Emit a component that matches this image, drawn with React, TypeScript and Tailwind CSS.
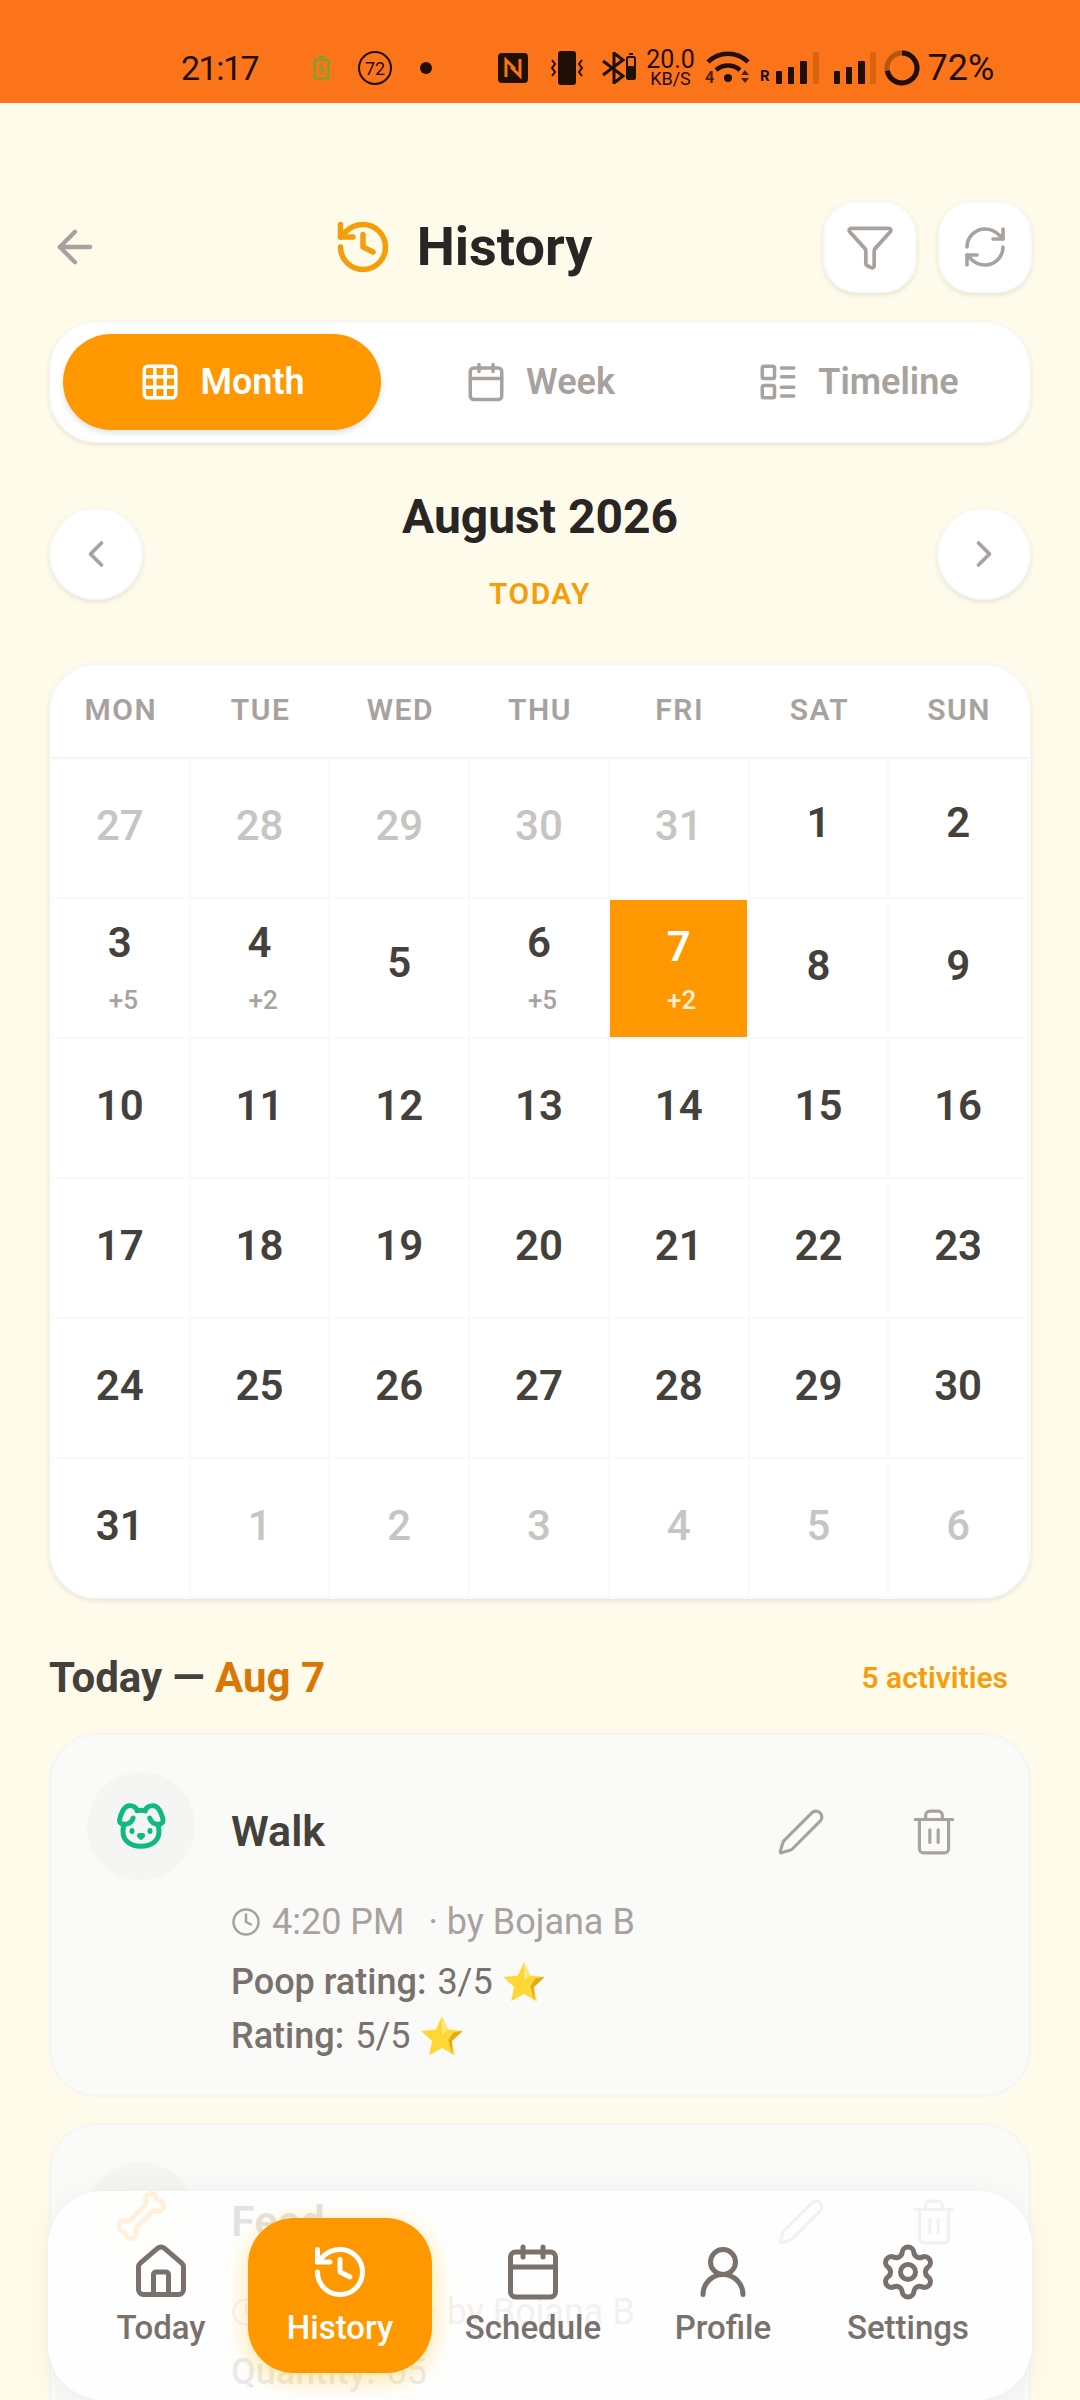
import {
  ArrowLeft,
  Bone,
  Calendar,
  ChevronLeft,
  ChevronRight,
  Clock,
  Dog,
  Funnel,
  Grid3x3,
  History,
  House,
  LayoutList,
  Pen,
  RefreshCw,
  Settings,
  Trash2,
  UserRound,
} from "lucide-react"
import type { ReactNode } from "react"

type Day = { d: number; muted?: boolean; badge?: string; today?: boolean; up?: boolean }

const weekdays = ["MON", "TUE", "WED", "THU", "FRI", "SAT", "SUN"]

const days: Day[] = [
  { d: 27, muted: true },
  { d: 28, muted: true },
  { d: 29, muted: true },
  { d: 30, muted: true },
  { d: 31, muted: true },
  { d: 1, up: true },
  { d: 2, up: true },
  { d: 3, badge: "+5" },
  { d: 4, badge: "+2" },
  { d: 5, up: true },
  { d: 6, badge: "+5" },
  { d: 7, badge: "+2", today: true },
  { d: 8 },
  { d: 9 },
  ...Array.from({ length: 22 }, (_, i) => ({ d: i + 10 })),
  { d: 1, muted: true },
  { d: 2, muted: true },
  { d: 3, muted: true },
  { d: 4, muted: true },
  { d: 5, muted: true },
  { d: 6, muted: true },
]

function Star() {
  return (
    <svg width="44" height="42" viewBox="0 0 40 38" className="ml-[9px]">
      <path d="M20 1l5.6 12 13.2 1.5-9.8 9 2.7 13L20 30l-11.7 6.5 2.7-13-9.8-9L14.400 13z" fill="#fdd835" />
      <path d="M20 1l5.600 12L20 18z" fill="#ffe873" />
      <path d="M29 23.500l9.800-9-8 1-5 7 3.500 14.500z" fill="#e8a81c" />
    </svg>
  )
}

function StatusIcons() {
  return (
    <div className="flex h-[103px] items-center bg-[#fc7419] pt-[33px] pl-[181px] font-['Roboto',sans-serif] text-[#1f0f04]">
      <span className="w-[78px] text-[34px] leading-none tracking-[-1.500px]">21:17</span>
      <svg width="17" height="24" viewBox="0 0 17 24" className="ml-[54px]" fill="none" stroke="#62ad2f" strokeWidth="2">
        <rect x="1.500" y="3.500" width="14" height="19" rx="2" />
        <path d="M6 1h5" />
        <path d="M9 8l-2.500 5h4l-2.500 5" strokeWidth="1.500" />
      </svg>
      <svg width="36" height="36" viewBox="0 0 36 36" className="ml-[27px]" fill="none" stroke="#1f0f04" strokeWidth="2">
        <circle cx="18" cy="18" r="16" />
        <text x="18" y="24.500" textAnchor="middle" fontSize="18" fill="#1f0f04" stroke="none" fontFamily="Roboto">72</text>
      </svg>
      <span className="ml-[27px] h-[12px] w-[12px] rounded-full bg-[#1f0f04]" />
      <svg width="30" height="30" viewBox="0 0 30 30" className="ml-[66px]">
        <rect width="30" height="30" rx="4" fill="#1f0f04" />
        <path d="M8 24V7l9 9M22 6v17l-9-9" fill="none" stroke="#fc7419" strokeWidth="3" />
      </svg>
      <svg width="36" height="34" viewBox="0 0 36 34" className="ml-[21px]" fill="#1f0f04">
        <rect x="9" y="0" width="18" height="34" rx="3" />
        <path d="M3 9l3 4-3 4 3 4-3 4M33 9l-3 4 3 4-3 4 3 4" fill="none" stroke="#1f0f04" strokeWidth="2" />
      </svg>
      <svg width="35" height="32" viewBox="0 0 35 32" className="ml-[17px]" fill="none" stroke="#1f0f04" strokeWidth="3">
        <path d="M1 9l20 15-9 7V1l9 7L1 23" />
        <rect x="25" y="5" width="8" height="22" rx="1.500" strokeWidth="2" />
        <rect x="25" y="14" width="8" height="13" fill="#1f0f04" stroke="none" />
        <path d="M27 2h4" strokeWidth="2" />
      </svg>
      <div className="ml-[9px] flex w-[49px] flex-col items-center">
        <span className="h-[20px] text-[25px] leading-[20px]">20.0</span>
        <span className="mt-[1px] h-[15px] text-[18px] leading-[15px]">KB/S</span>
      </div>
      <svg width="46" height="34" viewBox="0 0 46 34" className="ml-[10px] overflow-visible" fill="#1f0f04">
        <path d="M3 11C14 0 32 0 43 11M11 19c7-6 17-6 24 0" fill="none" stroke="#1f0f04" strokeWidth="4.500" />
        <circle cx="23" cy="27" r="4" />
        <text x="0" y="32" fontSize="16" fontWeight="700" fontFamily="Roboto" fill="#4a2408">4</text>
        <path d="M36 24l4-5 4 5zM36 27l4 5 4-5z" fill="#4a2408" />
      </svg>
      <span className="mt-[16px] ml-[9px] text-[15px] leading-none font-bold">R</span>
      <svg width="44" height="32" viewBox="0 0 44 32" className="ml-[6px]">
        <rect x="0" y="19" width="6" height="13" rx="1" fill="#1f0f04" />
        <rect x="12" y="15" width="6" height="17" rx="1" fill="#1f0f04" />
        <rect x="24" y="9" width="7" height="23" rx="1" fill="#1f0f04" />
        <rect x="37" y="0" width="6" height="32" rx="1" fill="#d9640f" />
      </svg>
      <svg width="44" height="32" viewBox="0 0 44 32" className="ml-[14px]">
        <rect x="0" y="19" width="6" height="13" rx="1" fill="#1f0f04" />
        <rect x="12" y="15" width="6" height="17" rx="1" fill="#1f0f04" />
        <rect x="24" y="9" width="7" height="23" rx="1" fill="#1f0f04" />
        <rect x="36" y="0" width="6" height="32" rx="1" fill="#d9640f" />
      </svg>
      <svg width="36" height="36" viewBox="0 0 36 36" className="ml-[6px]" fill="none" strokeWidth="5">
        <circle cx="18" cy="18" r="15" stroke="#b5560f" />
        <circle cx="18" cy="18" r="15" stroke="#1f0f04" pathLength="100" strokeDasharray="72 100" transform="rotate(-90 18 18)" />
      </svg>
      <span className="ml-[8px] text-[36px] leading-none">72%</span>
    </div>
  )
}

function RoundBtn({ children, full }: { children: ReactNode; full?: boolean }) {
  return (
    <div
      className={`flex h-[92px] w-[94px] items-center justify-center border-2 border-[#f9f9f7] bg-white shadow-[0_2px_5px_rgba(0,0,0,0.1)] ${
        full ? "rounded-full" : "rounded-[34px]"
      }`}
    >
      {children}
    </div>
  )
}

function Tab({ icon, label, active }: { icon: ReactNode; label: string; active?: boolean }) {
  return (
    <div
      className={`flex h-[96px] flex-1 items-center justify-center gap-[19px] rounded-full text-[36px] font-semibold ${
        active ? "bg-[#ff9800] text-white shadow-[0_3px_6px_rgba(0,0,0,0.12)]" : "text-[#a8a29e]"
      }`}
    >
      {icon}
      <span>{label}</span>
    </div>
  )
}

function Cell({ day }: { day: Day }) {
  if (day.today) {
    return (
      <div className="flex h-[140px] flex-col items-center border-r-2 border-b-2 border-[#fafaf9] pt-[1px]">
        <div className="flex h-[137px] w-[137px] flex-col items-center bg-[#ff9800] pt-[22px] text-white">
          <span className="text-[42px] leading-[50px] font-semibold">{day.d}</span>
          <span className="mt-[13px] ml-[6px] text-[26px] leading-[30px] font-medium text-[#ffedd5]">{day.badge}</span>
        </div>
      </div>
    )
  }
  return (
    <div
      className={`flex h-[140px] flex-col items-center border-r-2 border-b-2 border-[#fafaf9] ${
        day.badge ? "pt-[19px]" : day.up ? "justify-center pb-[11px]" : "justify-center pb-[4px]"
      }`}
    >
      <span
        className={`text-[42px] leading-[50px] ${day.muted ? "font-medium text-[#c7c5c2]" : "font-semibold text-[#44403c]"}`}
      >
        {day.d}
      </span>
      {day.badge && <span className="mt-[17px] ml-[7px] text-[26px] leading-[30px] font-medium text-[#a8a29e]">{day.badge}</span>}
    </div>
  )
}

function ActivityCard({
  icon,
  title,
  by,
  children,
}: {
  icon: ReactNode
  title: string
  by: string
  children: ReactNode
}) {
  return (
    <div className="mx-[49px] h-[364px] rounded-[48px] border-2 border-[#f5f5f4] bg-[#fafaf9] px-[36px] pt-[37px]">
      <div className="flex h-[108px] items-center">
        <div className="flex h-[108px] w-[108px] items-center justify-center rounded-full bg-[#f5f5f4]">{icon}</div>
        <span className="mt-[10px] ml-[36px] flex-1 text-[43px] font-semibold text-[#44403c]">{title}</span>
        <Pen size={50} strokeWidth={1.500} className="mt-[12px] text-[#a8a29e]" />
        <Trash2 size={50} strokeWidth={1.500} className="mt-[12px] mr-[34px] ml-[83px] text-[#a8a29e]" />
      </div>
      <div className="mt-[22px] ml-[144px] flex h-[40px] items-center text-[36px] text-[#a8a29e]">
        <Clock size={30} strokeWidth={2} />
        <span className="ml-[11px]">4:20 PM</span>
        <span className="ml-[24px]">· {by}</span>
      </div>
      <div className="mt-[15px] ml-[144px] text-[36px] text-[#78716c]">{children}</div>
    </div>
  )
}

function NavItem({ icon, label, width, active }: { icon: ReactNode; label: string; width: string; active?: boolean }) {
  return (
    <div
      className={`flex h-[155px] flex-col items-center pt-[24px] ${width} ${
        active ? "rounded-[46px] bg-[#ff9800] text-white shadow-[0_6px_24px_rgba(255,193,7,0.4)]" : "text-[#78716c]"
      }`}
    >
      {icon}
      <span className="mt-[4px] text-[33px] leading-[44px] font-medium">{label}</span>
    </div>
  )
}

export default function App() {
  return (
    <div className="relative h-[2400px] w-[1080px] overflow-hidden bg-[#fffbeb] font-['Roboto',sans-serif]">
      <StatusIcons />

      <div className="mt-[98px] flex items-center pr-[48px] pl-[49px]">
        <div className="w-[94px]">
          <ArrowLeft size={52} strokeWidth={2} className="text-[#a8a29e]" />
        </div>
        <div className="flex flex-1 items-center justify-center gap-[24px] pr-[41px]">
          <History size={60} strokeWidth={2.200} className="text-[#f59e0b]" />
          <span className="text-[54px] leading-none font-bold text-[#292524]">History</span>
        </div>
        <div className="flex gap-[21px]">
          <RoundBtn>
            <Funnel size={50} strokeWidth={1.800} className="text-[#a8a29e]" />
          </RoundBtn>
          <RoundBtn>
            <RefreshCw size={48} strokeWidth={1.800} className="text-[#a8a29e]" />
          </RoundBtn>
        </div>
      </div>

      <div className="mx-[49px] mt-[28px] flex h-[122px] items-center rounded-[48px] border-2 border-[#f9f9f7] bg-white px-[12px] shadow-[0_2px_4px_rgba(0,0,0,0.1)]">
        <Tab active label="Month" icon={<Grid3x3 size={42} strokeWidth={2} />} />
        <Tab label="Week" icon={<Calendar size={42} strokeWidth={2} />} />
        <Tab label="Timeline" icon={<LayoutList size={42} strokeWidth={2} />} />
      </div>

      <div className="mx-[49px] mt-[46px] flex h-[130px] items-center justify-between">
        <RoundBtn full>
          <ChevronLeft size={44} strokeWidth={2} className="text-[#a8a29e]" />
        </RoundBtn>
        <div className="flex h-[130px] flex-col items-center">
          <span className="text-[48px] leading-[56px] font-bold text-[#292524]">August 2026</span>
          <span className="mt-[32px] text-[30px] leading-[34px] font-semibold tracking-[1.500px] text-[#f59e0b]">TODAY</span>
        </div>
        <RoundBtn full>
          <ChevronRight size={44} strokeWidth={2} className="text-[#a8a29e]" />
        </RoundBtn>
      </div>

      <div className="mx-[49px] mt-[44px] h-[936px] overflow-hidden rounded-[48px] border-2 border-[#f9f9f7] bg-white shadow-[0_2px_5px_rgba(0,0,0,0.1)]">
        <div className="grid h-[94px] grid-cols-7 items-center border-b-2 border-[#f5f5f4] pb-[4px]">
          {weekdays.map((w) => (
            <span key={w} className="text-center text-[30px] font-semibold tracking-[1.500px] text-[#a8a29e]">
              {w}
            </span>
          ))}
        </div>
        <div className="grid grid-cols-7">
          {days.map((day, i) => (
            <Cell key={i} day={day} />
          ))}
        </div>
      </div>

      <div className="mt-[51px] mr-[72px] ml-[49px] flex h-[54px] items-center justify-between">
        <span className="text-[42px] font-bold text-[#44403c]">
          Today — <span className="text-[#d97706]">Aug 7</span>
        </span>
        <span className="text-[30px] font-semibold text-[#f59e0b]">5 activities</span>
      </div>

      <div className="mt-[29px] flex flex-col gap-[26px]">
        <ActivityCard title="Walk" by="by Bojana B" icon={<Dog size={54} strokeWidth={2.200} className="text-[#10b981]" />}>
          <div className="flex h-[50px] items-center">
            <span className="font-medium">Poop rating:</span>
            <span className="ml-[11px]">3/5</span>
            <Star />
          </div>
          <div className="mt-[4px] flex h-[50px] items-center">
            <span className="font-medium">Rating:</span>
            <span className="ml-[11px]">5/5</span>
            <Star />
          </div>
        </ActivityCard>
        <ActivityCard title="Feed" by="by Bojana B" icon={<Bone size={54} strokeWidth={2.200} className="text-[#f59e0b]" />}>
          <div className="flex h-[50px] items-center">
            <span className="font-medium">Quantity:</span>
            <span className="ml-[11px]">65</span>
          </div>
        </ActivityCard>
      </div>

      <div className="absolute right-[48px] bottom-0 left-[48px] flex h-[209px] rounded-[56px] bg-white/85 pt-[27px] pl-[23px] shadow-[0_4px_30px_rgba(0,0,0,0.06)]">
        <NavItem width="w-[177px] pl-[3px]" label="Today" icon={<House size={60} strokeWidth={2} />} />
        <NavItem width="w-[184px]" active label="History" icon={<History size={60} strokeWidth={2} />} />
        <NavItem width="w-[202px]" label="Schedule" icon={<Calendar size={60} strokeWidth={2} />} />
        <NavItem width="w-[178px]" label="Profile" icon={<UserRound size={60} strokeWidth={2} />} />
        <NavItem width="w-[192px]" label="Settings" icon={<Settings size={60} strokeWidth={2} />} />
      </div>
    </div>
  )
}
